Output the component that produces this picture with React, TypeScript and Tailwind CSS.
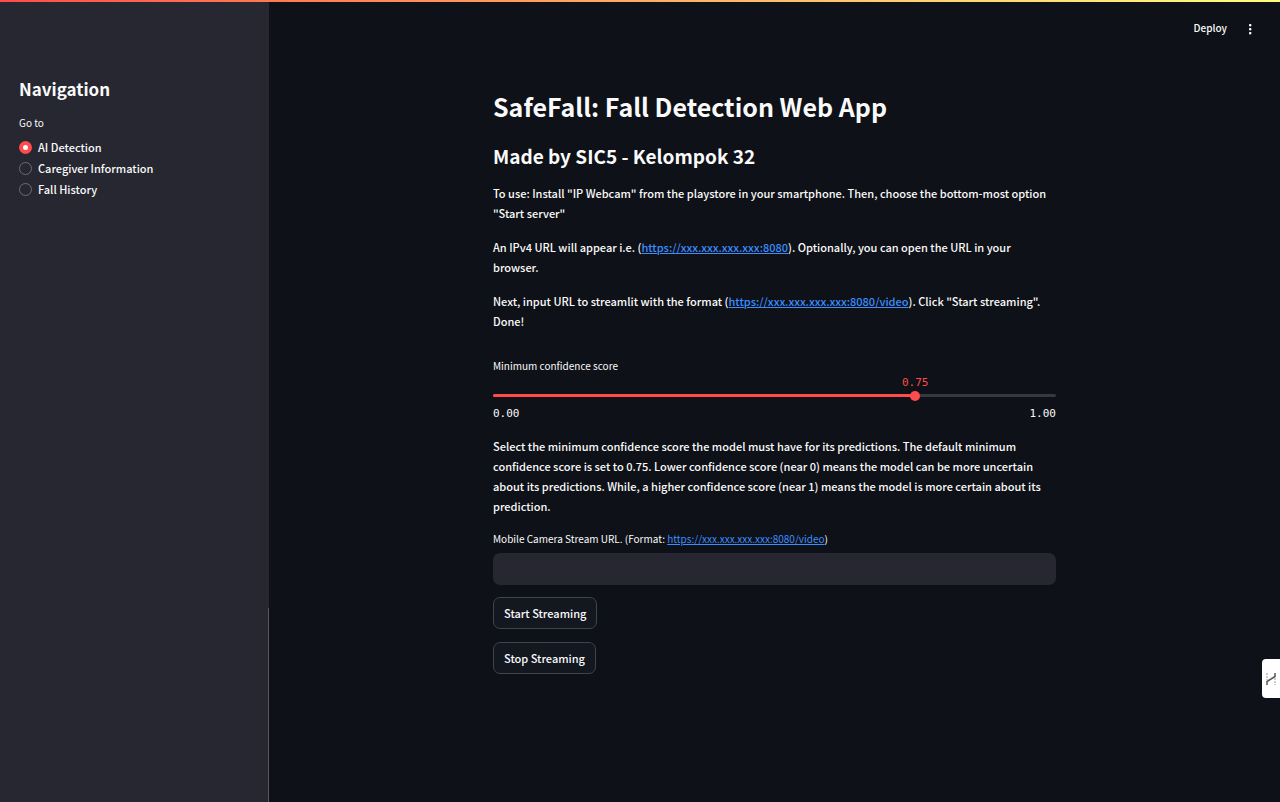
import { useState } from "react";

const pages = ["AI Detection", "Caregiver Information", "Fall History"];

function StreamLink({ href }: { href: string }) {
  return (
    <a href={href} className="text-[#3b8eff] underline">
      {href}
    </a>
  );
}

function Sidebar() {
  const [page, setPage] = useState(pages[0]);
  return (
    <aside className="flex w-[269px] shrink-0 bg-[#262730]">
      <div className="flex-1 px-[19px] pt-[76px]">
        <h2 className="text-[17px] leading-[26px] font-bold">Navigation</h2>
        <fieldset className="mt-3">
          <legend className="text-[10px] leading-[18px]">Go to</legend>
          <div className="mt-[5px] flex flex-col items-start">
            {pages.map((name) => (
              <label key={name} className="flex items-center gap-[6px] text-[11px] leading-[21px] font-medium">
                <input
                  type="radio"
                  name="page"
                  checked={page === name}
                  onChange={() => setPage(name)}
                  className="size-[13px] appearance-none rounded-full border border-[#6b6c75] checked:border-4 checked:border-[#ff4b4b] checked:bg-white"
                />
                {name}
              </label>
            ))}
          </div>
        </fieldset>
      </div>
      <div className="mt-[608px] w-px bg-[#55565f]" />
    </aside>
  );
}

function ConfidenceSlider() {
  const [value, setValue] = useState(0.75);
  return (
    <div>
      <label htmlFor="confidence" className="block text-[10px] leading-[18px]">
        Minimum confidence score
      </label>
      <div className="relative mt-[19px] h-[3px] rounded-full bg-[#363841]">
        <div className="h-full rounded-full bg-[#ff4b4b]" style={{ width: `${value * 100}%` }} />
        <output
          htmlFor="confidence"
          className="absolute bottom-[7px] -translate-x-1/2 font-['DejaVu_Sans_Mono',monospace] text-[11px] leading-[14px] text-[#ff4b4b]"
          style={{ left: `${value * 100}%` }}
        >
          {value.toFixed(2)}
        </output>
        <input
          id="confidence"
          type="range"
          min={0}
          max={1}
          step={0.01}
          value={value}
          onChange={(e) => setValue(Number(e.target.value))}
          className="absolute -inset-x-[5px] -top-1 h-[11px] appearance-none bg-transparent [&::-webkit-slider-thumb]:size-[10px] [&::-webkit-slider-thumb]:appearance-none [&::-webkit-slider-thumb]:rounded-full [&::-webkit-slider-thumb]:bg-[#ff4b4b]"
        />
      </div>
      <div className="mt-[10px] flex justify-between font-['DejaVu_Sans_Mono',monospace] text-[11px] leading-[14px]">
        <span>0.00</span>
        <span>1.00</span>
      </div>
    </div>
  );
}

function ActionButton({ children }: { children: string }) {
  return (
    <button
      type="button"
      className="h-8 rounded-[7px] border border-[#41444c] bg-[#131720] px-[10px] text-[11px] leading-5 font-medium"
    >
      {children}
    </button>
  );
}

export default function App() {
  return (
    <div className="relative flex min-h-screen bg-[#0e1117] font-['Noto_Sans_CJK_SC',sans-serif] text-[#fafafa]">
      <div className="absolute inset-x-0 top-0 h-[2px] bg-linear-to-r from-[#ff4b4b] to-[#fffd80]" />
      <Sidebar />
      <div className="flex min-w-0 flex-1 flex-col">
        <header className="flex h-14 items-center justify-end gap-[15px] pr-[22px]">
          <button type="button" className="text-[10px] leading-4 font-medium">
            Deploy
          </button>
          <button type="button" aria-label="Main menu">
            <svg viewBox="0 0 16 16" className="size-4" fill="currentColor">
              <rect x="7" y="4" width="2.4" height="2.4" rx=".8" />
              <rect x="7" y="8" width="2.4" height="2.4" rx=".8" />
              <rect x="7" y="12" width="2.4" height="2.4" rx=".8" />
            </svg>
          </button>
        </header>
        <main className="mx-auto w-full max-w-[563px] pt-8">
          <h1 className="text-[25px] leading-9 font-bold">SafeFall: Fall Detection Web App</h1>
          <h2 className="mt-[18px] text-[19px] leading-7 font-bold">Made by SIC5 - Kelompok 32</h2>
          <div className="mt-[13px] flex flex-col gap-[14px] text-[11px] leading-5 font-medium">
            <p>
              To use: Install "IP Webcam" from the playstore in your smartphone. Then, choose the bottom-most option
              <br />
              "Start server"
            </p>
            <p>
              An IPv4 URL will appear i.e. (<StreamLink href="https://xxx.xxx.xxx.xxx:8080" />). Optionally, you can
              open the URL in your
              <br />
              browser.
            </p>
            <p>
              Next, input URL to streamlit with the format (<StreamLink href="https://xxx.xxx.xxx.xxx:8080/video" />).
              Click "Start streaming".
              <br />
              Done!
            </p>
          </div>
          <div className="mt-[26px]">
            <ConfidenceSlider />
          </div>
          <p className="mt-[15px] text-[11px] leading-5 font-medium">
            Select the minimum confidence score the model must have for its predictions. The default minimum
            <br />
            confidence score is set to 0.75. Lower confidence score (near 0) means the model can be more uncertain
            <br />
            about its predictions. While, a higher confidence score (near 1) means the model is more certain about its
            <br />
            prediction.
          </p>
          <label htmlFor="stream-url" className="mt-[14px] block text-[10px] leading-[18px]">
            Mobile Camera Stream URL. (Format: <StreamLink href="https://xxx.xxx.xxx.xxx:8080/video" />)
          </label>
          <input
            id="stream-url"
            type="text"
            className="mt-[5px] block h-8 w-full rounded-[7px] bg-[#262730] px-3 text-[11px]"
          />
          <div className="mt-3 flex flex-col items-start gap-[13px]">
            <ActionButton>Start Streaming</ActionButton>
            <ActionButton>Stop Streaming</ActionButton>
          </div>
        </main>
      </div>
      <button
        type="button"
        aria-label="Open side panel"
        className="absolute top-[659px] right-0 flex h-[39px] w-[18px] items-center justify-center rounded-l-[4px] bg-white text-[#555]"
      >
        <svg viewBox="0 0 10 14" className="h-[14px] w-[10px]" fill="none" stroke="currentColor">
          <path d="M1 13V9.5L9 4.5V1" strokeWidth="1.5" />
          <path d="M1 1V8M9 6V13" strokeWidth="1" strokeDasharray="2 1" opacity=".6" />
        </svg>
      </button>
    </div>
  );
}
